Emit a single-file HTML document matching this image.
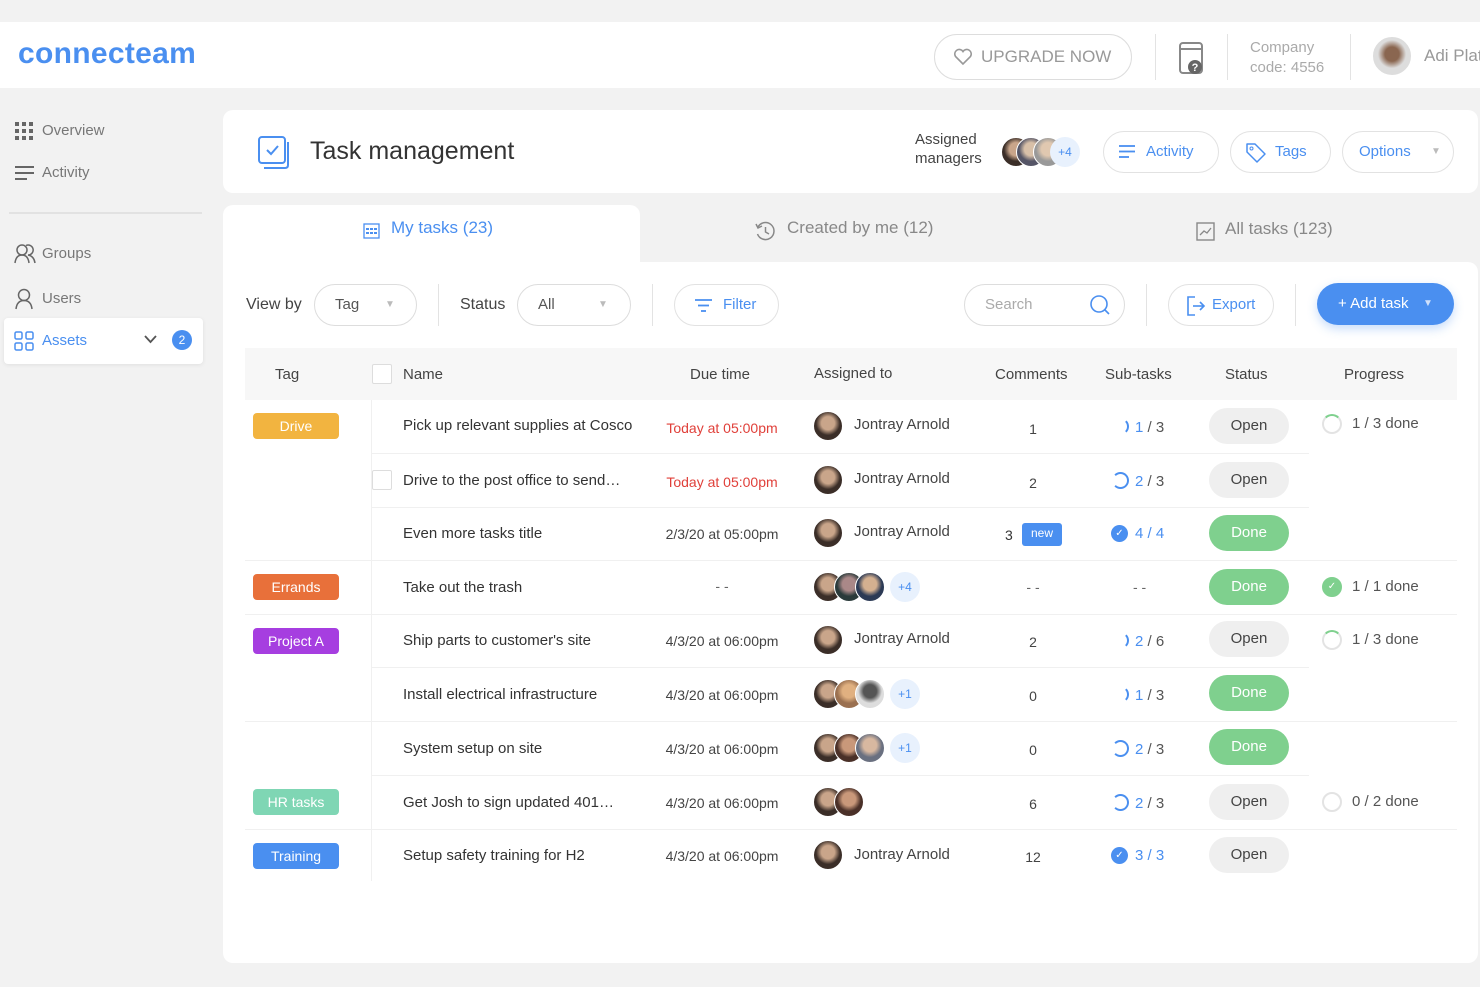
<!DOCTYPE html>
<html><head><meta charset="utf-8"><style>
*{box-sizing:border-box;margin:0;padding:0}
body{width:1480px;height:987px;background:#f2f2f2;font-family:"Liberation Sans",sans-serif;position:relative;overflow:hidden;color:#333}
.a{position:absolute;white-space:nowrap}
.hdr{left:0;top:22px;width:1480px;height:66px;background:#fff}
.logo{left:18px;top:37px;font-size:30px;color:#4a8ff0;font-weight:bold;letter-spacing:0.3px}
.up{left:934px;top:34px;width:198px;height:46px;border:1.5px solid #ddd;border-radius:23px;color:#999;font-size:17px;line-height:43px;padding-left:46px}
.vl{width:1px;background:#e3e3e3}
.side{color:#777;font-size:15px}
.card{background:#fff;border-radius:10px}
.btn{border:1.5px solid #e2e2e2;border-radius:22px;height:42px;line-height:39px;font-size:15px;color:#4a8ff0}
.sel{border:1.5px solid #ddd;border-radius:22px;height:42px;line-height:39px;font-size:15px;color:#555}
.th{font-size:15px;color:#444}
.tag{left:253px;width:86px;height:26px;border-radius:4px;color:#fff;font-size:14px;text-align:center;line-height:26px}
.nm{left:403px;font-size:15px;color:#333}
.due{width:160px;left:642px;text-align:center;font-size:14px;color:#444}
.red{color:#e0403a}
.av{width:30px;height:30px;border-radius:50%;background:radial-gradient(circle at 50% 40%,#c9a58a 0 30%,#3b2e28 55%);border:1.5px solid #fff}
.jn{left:854px;font-size:15px;color:#444}
.cm{left:1003px;width:60px;text-align:center;font-size:14px;color:#444}
.st{left:1112px;font-size:15px;color:#4a8ff0}
.pill{left:1209px;width:80px;height:36px;border-radius:18px;text-align:center;line-height:36px;font-size:15px}
.op{background:#efefef;color:#444}
.dn{background:#7fd08e;color:#fff}
.pr{left:1322px;font-size:15px;color:#555}
.ring{display:inline-block;width:20px;height:20px;border-radius:50%;border:2px solid #e3e3e3;border-top-color:#7fd08e;vertical-align:middle;margin-right:10px}
.sr{display:inline-block;width:17px;height:17px;border-radius:50%;border:2px solid transparent;border-right-color:#4a8ff0;vertical-align:-3px;margin-right:6px}
.sr2{border-color:#4a8ff0 #4a8ff0 #4a8ff0 transparent}
.more{width:30px;height:30px;border-radius:50%;background:#e8f1fd;color:#4a8ff0;font-size:12px;text-align:center;line-height:30px}
.rl{left:245px;width:1212px;height:1px;background:#f0f0f0}
</style></head><body>
<div class="a hdr"></div>
<div class="a logo">connecteam</div>
<div class="a up"><svg class="a" style="left:18px;top:13px" width="20" height="18" viewBox="0 0 20 18"><path d="M10 16 L2.5 8.5 A4.3 4.3 0 0 1 10 3.5 A4.3 4.3 0 0 1 17.5 8.5 Z" fill="none" stroke="#999" stroke-width="1.6"/></svg>UPGRADE NOW</div>
<div class="a vl" style="left:1155px;top:34px;height:46px"></div>
<svg class="a" style="left:1178px;top:40px" width="28" height="36" viewBox="0 0 28 36"><rect x="2" y="3" width="22" height="30" rx="3" fill="none" stroke="#888" stroke-width="2"/><line x1="2" y1="9" x2="24" y2="9" stroke="#888" stroke-width="2"/><circle cx="17" cy="27" r="7" fill="#666"/><text x="17" y="31" font-size="11" fill="#fff" text-anchor="middle" font-family="Liberation Sans" font-weight="bold">?</text></svg>
<div class="a vl" style="left:1227px;top:34px;height:46px"></div>
<div class="a" style="left:1250px;top:38px;font-size:15px;color:#aaa;line-height:20px">Company<br>code: 4556</div>
<div class="a vl" style="left:1350px;top:34px;height:46px"></div>
<div class="a av" style="left:1372px;top:36px;width:40px;height:40px;background:radial-gradient(circle at 50% 45%,#8a6650 0 25%,#ddd 50%)"></div>
<div class="a" style="left:1424px;top:46px;font-size:17px;color:#999">Adi Plat</div>

<svg class="a" style="left:15px;top:122px" width="18" height="18"><g fill="#666"><rect x="0" y="0" width="4" height="4"/><rect x="7" y="0" width="4" height="4"/><rect x="14" y="0" width="4" height="4"/><rect x="0" y="7" width="4" height="4"/><rect x="7" y="7" width="4" height="4"/><rect x="14" y="7" width="4" height="4"/><rect x="0" y="14" width="4" height="4"/><rect x="7" y="14" width="4" height="4"/><rect x="14" y="14" width="4" height="4"/></g></svg>
<div class="a side" style="left:42px;top:122px">Overview</div>
<svg class="a" style="left:15px;top:166px" width="19" height="14"><g stroke="#666" stroke-width="2"><line x1="0" y1="1" x2="19" y2="1"/><line x1="0" y1="7" x2="19" y2="7"/><line x1="0" y1="13" x2="12" y2="13"/></g></svg>
<div class="a side" style="left:42px;top:164px">Activity</div>
<div class="a" style="left:9px;top:212px;width:193px;height:2px;background:#e2e2e2"></div>
<svg class="a" style="left:14px;top:243px" width="22" height="22" viewBox="0 0 22 22"><g fill="none" stroke="#666" stroke-width="1.5"><circle cx="8" cy="7" r="5"/><path d="M1 20 Q2 12 8 12 Q14 12 15 20"/><path d="M12 2.5 A5 5 0 1 1 14 12 Q20 13 21 20"/></g></svg>
<div class="a side" style="left:42px;top:245px">Groups</div>
<svg class="a" style="left:14px;top:288px" width="20" height="22" viewBox="0 0 20 22"><g fill="none" stroke="#666" stroke-width="1.5"><circle cx="10" cy="7" r="5.5"/><path d="M2 21 Q3 12.5 10 12.5 Q17 12.5 18 21"/></g></svg>
<div class="a side" style="left:42px;top:290px">Users</div>
<div class="a" style="left:4px;top:318px;width:199px;height:46px;background:#fff;border-radius:4px;box-shadow:0 1px 4px rgba(0,0,0,.08)"></div>
<svg class="a" style="left:14px;top:331px" width="21" height="21"><g fill="none" stroke="#4a8ff0" stroke-width="1.5"><rect x="1" y="1" width="7" height="7" rx="1.5"/><rect x="12" y="1" width="7" height="7" rx="1.5"/><rect x="1" y="12" width="7" height="7" rx="1.5"/><rect x="12" y="12" width="7" height="7" rx="1.5"/></g></svg>
<div class="a side" style="left:42px;top:332px;color:#4a8ff0">Assets</div>
<svg class="a" style="left:144px;top:335px" width="13" height="9"><path d="M1 1 L6.5 7 L12 1" fill="none" stroke="#555" stroke-width="1.8"/></svg>
<div class="a" style="left:172px;top:330px;width:20px;height:20px;border-radius:50%;background:#4a8ff0;color:#fff;font-size:12px;text-align:center;line-height:20px">2</div>

<div class="a card" style="left:223px;top:110px;width:1255px;height:83px"></div>
<svg class="a" style="left:257px;top:135px" width="36" height="36" viewBox="0 0 36 36"><rect x="2" y="2" width="26" height="26" rx="3" fill="none" stroke="#4a8ff0" stroke-width="2"/><path d="M31 7 V30 Q31 33 28 33 H7" fill="none" stroke="#4a8ff0" stroke-width="2"/><path d="M10 15 L14 19 L21 11" fill="none" stroke="#4a8ff0" stroke-width="2"/></svg>
<div class="a" style="left:310px;top:137px;font-size:25px;color:#333">Task management</div>
<div class="a" style="left:915px;top:130px;font-size:15px;color:#444;line-height:19px">Assigned<br>managers</div>
<div class="a av" style="left:1001px;top:137px"></div>
<div class="a av" style="left:1016px;top:137px;background:radial-gradient(circle at 50% 40%,#d8c0a8 0 30%,#556 55%)"></div>
<div class="a av" style="left:1033px;top:137px;background:radial-gradient(circle at 50% 40%,#e0c8b0 0 30%,#999 55%)"></div>
<div class="a more" style="left:1050px;top:137px">+4</div>
<div class="a btn" style="left:1103px;top:131px;width:116px;padding-left:42px">Activity<svg class="a" style="left:15px;top:13px" width="16" height="13"><g stroke="#4a8ff0" stroke-width="1.8"><line x1="0" y1="1" x2="16" y2="1"/><line x1="0" y1="6.5" x2="16" y2="6.5"/><line x1="0" y1="12" x2="10" y2="12"/></g></svg></div>
<div class="a btn" style="left:1230px;top:131px;width:101px;padding-left:44px">Tags<svg class="a" style="left:14px;top:10px" width="22" height="22" viewBox="0 0 22 22"><path d="M2 2 H10 L20 12 L12 20 L2 10 Z" fill="none" stroke="#4a8ff0" stroke-width="1.5" stroke-linejoin="round"/><circle cx="6.5" cy="6.5" r="1.5" fill="none" stroke="#4a8ff0"/></svg></div>
<div class="a btn" style="left:1342px;top:131px;width:112px;padding-left:16px">Options<span class="a" style="left:88px;top:0;color:#bbb;font-size:10px">▼</span></div>

<div class="a" style="left:223px;top:205px;width:417px;height:70px;background:#fff;border-radius:10px 10px 0 0"></div>
<svg class="a" style="left:363px;top:222px" width="17" height="17"><rect x="1" y="2" width="15" height="14" fill="none" stroke="#4a8ff0" stroke-width="1.3"/><g fill="#4a8ff0"><rect x="3" y="6" width="3" height="2"/><rect x="7" y="6" width="3" height="2"/><rect x="11" y="6" width="3" height="2"/><rect x="3" y="10" width="3" height="2"/><rect x="7" y="10" width="3" height="2"/><rect x="11" y="10" width="3" height="2"/></g></svg>
<div class="a" style="left:391px;top:218px;font-size:17px;color:#4a8ff0">My tasks (23)</div>
<svg class="a" style="left:755px;top:221px" width="21" height="21" viewBox="0 0 21 21"><path d="M3 6 A8.5 8.5 0 1 1 2.5 13" fill="none" stroke="#888" stroke-width="1.5"/><path d="M1 3 L3 7 L7 5" fill="none" stroke="#888" stroke-width="1.5"/><path d="M10.5 6 V11 L14 13" fill="none" stroke="#888" stroke-width="1.5"/></svg>
<div class="a" style="left:787px;top:218px;font-size:17px;color:#888">Created by me (12)</div>
<svg class="a" style="left:1196px;top:222px" width="19" height="19"><rect x="1" y="1" width="17" height="17" fill="none" stroke="#888" stroke-width="1.4"/><path d="M4 13 L8 9 L11 11 L15 6" fill="none" stroke="#888" stroke-width="1.3"/></svg>
<div class="a" style="left:1225px;top:219px;font-size:17px;color:#888">All tasks (123)</div>

<div class="a" style="left:223px;top:262px;width:1255px;height:701px;background:#fff;border-radius:0 10px 10px 10px"></div>
<div class="a" style="left:223px;top:263px;width:417px;height:12px;background:#fff"></div>
<div class="a" style="left:246px;top:296px;font-size:16px;color:#444">View by</div>
<div class="a sel" style="left:314px;top:284px;width:103px;padding-left:20px">Tag<span class="a" style="left:70px;color:#bbb;font-size:10px">▼</span></div>
<div class="a vl" style="left:438px;top:284px;height:42px"></div>
<div class="a" style="left:460px;top:296px;font-size:16px;color:#444">Status</div>
<div class="a sel" style="left:517px;top:284px;width:114px;padding-left:20px">All<span class="a" style="left:80px;color:#bbb;font-size:10px">▼</span></div>
<div class="a vl" style="left:652px;top:284px;height:42px"></div>
<div class="a btn" style="left:674px;top:284px;width:105px;padding-left:48px">Filter<svg class="a" style="left:20px;top:14px" width="17" height="14"><g stroke="#4a8ff0" stroke-width="1.8"><line x1="0" y1="1" x2="17" y2="1"/><line x1="3" y1="6.5" x2="14" y2="6.5"/><line x1="6" y1="12" x2="11" y2="12"/></g></svg></div>
<div class="a sel" style="left:964px;top:284px;width:161px;padding-left:20px;color:#aaa">Search<svg class="a" style="left:124px;top:9px" width="22" height="22"><circle cx="10" cy="10" r="8" fill="none" stroke="#4a8ff0" stroke-width="1.6"/><line x1="15.5" y1="15.5" x2="20" y2="20" stroke="#4a8ff0" stroke-width="1.6"/></svg></div>
<div class="a vl" style="left:1146px;top:284px;height:42px"></div>
<div class="a btn" style="left:1168px;top:284px;width:106px;padding-left:43px">Export<svg class="a" style="left:16px;top:10px" width="22" height="22"><path d="M10 2 H3 V20 H10" fill="none" stroke="#4a8ff0" stroke-width="1.6"/><line x1="8" y1="11" x2="19" y2="11" stroke="#4a8ff0" stroke-width="1.6"/><path d="M15 7 L19 11 L15 15" fill="none" stroke="#4a8ff0" stroke-width="1.6"/></svg></div>
<div class="a vl" style="left:1295px;top:284px;height:42px"></div>
<div class="a" style="left:1317px;top:283px;width:137px;height:42px;border-radius:21px;background:#4a8ff0;color:#fff;font-size:15px;line-height:42px;padding-left:21px;box-shadow:0 4px 10px rgba(74,143,240,.3)">+ Add task<span class="a" style="left:106px;font-size:10px;color:#cfe0fb">▼</span></div>

<div class="a" style="left:245px;top:348px;width:1212px;height:52px;background:#f7f7f7"></div>
<div class="a th" style="left:275px;top:366px">Tag</div>
<div class="a" style="left:372px;top:364px;width:20px;height:20px;border:1.5px solid #ddd;background:#fff;border-radius:2px"></div>
<div class="a th" style="left:403px;top:366px">Name</div>
<div class="a th" style="left:690px;top:366px">Due time</div>
<div class="a th" style="left:814px;top:365px">Assigned to</div>
<div class="a th" style="left:995px;top:366px">Comments</div>
<div class="a th" style="left:1105px;top:366px">Sub-tasks</div>
<div class="a th" style="left:1225px;top:366px">Status</div>
<div class="a th" style="left:1344px;top:366px">Progress</div>

<div class="a" style="left:371px;top:400px;width:1px;height:481px;background:#f0f0f0"></div>
<div class="a rl" style="top:453px;left:372px;width:937px"></div>
<div class="a rl" style="top:507px;left:372px;width:937px"></div>
<div class="a rl" style="top:560px"></div>
<div class="a rl" style="top:614px"></div>
<div class="a rl" style="top:667px;left:372px;width:937px"></div>
<div class="a rl" style="top:721px"></div>
<div class="a rl" style="top:775px;left:372px;width:937px"></div>
<div class="a rl" style="top:829px"></div>

<div class="a tag" style="top:413px;background:#f2b440">Drive</div>
<div class="a nm" style="top:417px">Pick up relevant supplies at Cosco</div>
<div class="a due red" style="top:420px">Today at 05:00pm</div>
<div class="a av" style="left:813px;top:411px"></div><div class="a jn" style="top:416px">Jontray Arnold</div>
<div class="a cm" style="top:421px">1</div>
<div class="a st" style="top:418px"><span class="sr"></span>1 <span style="color:#555">/ 3</span></div>
<div class="a pill op" style="top:408px">Open</div>
<div class="a pr" style="top:414px"><span class="ring"></span>1 / 3 done</div>

<div class="a" style="left:372px;top:470px;width:20px;height:20px;border:1.5px solid #ddd;border-radius:2px"></div>
<div class="a nm" style="top:472px">Drive to the post office to send…</div>
<div class="a due red" style="top:474px">Today at 05:00pm</div>
<div class="a av" style="left:813px;top:465px"></div><div class="a jn" style="top:470px">Jontray Arnold</div>
<div class="a cm" style="top:475px">2</div>
<div class="a st" style="top:472px"><span class="sr sr2"></span>2 <span style="color:#555">/ 3</span></div>
<div class="a pill op" style="top:462px">Open</div>

<div class="a nm" style="top:525px">Even more tasks title</div>
<div class="a due" style="top:526px">2/3/20 at 05:00pm</div>
<div class="a av" style="left:813px;top:518px"></div><div class="a jn" style="top:523px">Jontray Arnold</div>
<div class="a" style="left:1005px;top:527px;font-size:14px">3</div>
<div class="a" style="left:1022px;top:523px;width:40px;height:23px;background:#4a8ff0;border-radius:3px;color:#fff;font-size:12px;text-align:center;line-height:20px">new</div>
<div class="a" style="left:1111px;top:525px;width:17px;height:17px;border-radius:50%;background:#4a8ff0;color:#fff;font-size:10px;text-align:center;line-height:17px">✓</div>
<div class="a st" style="left:1135px;top:525px">4 / 4</div>
<div class="a pill dn" style="top:515px">Done</div>

<div class="a tag" style="top:574px;background:#e8703a">Errands</div>
<div class="a nm" style="top:579px">Take out the trash</div>
<div class="a due" style="top:578px;color:#666">- -</div>
<div class="a av" style="left:813px;top:572px"></div><div class="a av" style="left:834px;top:572px;background:radial-gradient(circle at 50% 40%,#a88 0 30%,#2a3a3a 55%)"></div><div class="a av" style="left:855px;top:572px;background:radial-gradient(circle at 50% 40%,#d4b090 0 30%,#2c3a55 55%)"></div>
<div class="a more" style="left:890px;top:572px">+4</div>
<div class="a cm" style="top:579px;color:#666">- -</div>
<div class="a" style="left:1133px;top:579px;color:#666;font-size:14px">- -</div>
<div class="a pill dn" style="top:569px">Done</div>
<div class="a pr" style="top:577px"><span class="ring" style="background:#7fd08e;border-color:#7fd08e;color:#fff;font-size:10px;text-align:center;line-height:16px">✓</span>1 / 1 done</div>

<div class="a tag" style="top:628px;background:#a63ee0">Project A</div>
<div class="a nm" style="top:632px">Ship parts to customer's site</div>
<div class="a due" style="top:633px">4/3/20 at 06:00pm</div>
<div class="a av" style="left:813px;top:625px"></div><div class="a jn" style="top:630px">Jontray Arnold</div>
<div class="a cm" style="top:634px">2</div>
<div class="a st" style="top:632px"><span class="sr"></span>2 <span style="color:#555">/ 6</span></div>
<div class="a pill op" style="top:621px">Open</div>
<div class="a pr" style="top:630px"><span class="ring"></span>1 / 3 done</div>

<div class="a nm" style="top:686px">Install electrical infrastructure</div>
<div class="a due" style="top:687px">4/3/20 at 06:00pm</div>
<div class="a av" style="left:813px;top:679px"></div><div class="a av" style="left:834px;top:679px;background:radial-gradient(circle at 50% 40%,#e0b080 0 30%,#9a7050 55%)"></div><div class="a av" style="left:855px;top:679px;background:radial-gradient(circle at 50% 40%,#555 0 30%,#ddd 55%)"></div>
<div class="a more" style="left:890px;top:679px">+1</div>
<div class="a cm" style="top:688px">0</div>
<div class="a st" style="top:686px"><span class="sr"></span>1 <span style="color:#555">/ 3</span></div>
<div class="a pill dn" style="top:675px">Done</div>

<div class="a nm" style="top:740px">System setup on site</div>
<div class="a due" style="top:741px">4/3/20 at 06:00pm</div>
<div class="a av" style="left:813px;top:733px"></div><div class="a av" style="left:834px;top:733px;background:radial-gradient(circle at 50% 40%,#c9987a 0 30%,#4a3028 55%)"></div><div class="a av" style="left:855px;top:733px;background:radial-gradient(circle at 50% 40%,#d8b8a0 0 30%,#6a7080 55%)"></div>
<div class="a more" style="left:890px;top:733px">+1</div>
<div class="a cm" style="top:742px">0</div>
<div class="a st" style="top:740px"><span class="sr sr2"></span>2 <span style="color:#555">/ 3</span></div>
<div class="a pill dn" style="top:729px">Done</div>

<div class="a tag" style="top:789px;background:#7fd6b4">HR tasks</div>
<div class="a nm" style="top:794px">Get Josh to sign updated 401…</div>
<div class="a due" style="top:795px">4/3/20 at 06:00pm</div>
<div class="a av" style="left:813px;top:787px"></div><div class="a av" style="left:834px;top:787px;background:radial-gradient(circle at 50% 40%,#c9987a 0 30%,#4a3028 55%)"></div>
<div class="a cm" style="top:796px">6</div>
<div class="a st" style="top:794px"><span class="sr sr2"></span>2 <span style="color:#555">/ 3</span></div>
<div class="a pill op" style="top:784px">Open</div>
<div class="a pr" style="top:792px"><span class="ring" style="border-color:#e3e3e3"></span>0 / 2 done</div>

<div class="a tag" style="top:843px;background:#4a8ff0">Training</div>
<div class="a nm" style="top:847px">Setup safety training for H2</div>
<div class="a due" style="top:848px">4/3/20 at 06:00pm</div>
<div class="a av" style="left:813px;top:840px"></div><div class="a jn" style="top:846px">Jontray Arnold</div>
<div class="a cm" style="top:849px">12</div>
<div class="a" style="left:1111px;top:847px;width:17px;height:17px;border-radius:50%;background:#4a8ff0;color:#fff;font-size:10px;text-align:center;line-height:17px">✓</div>
<div class="a st" style="left:1135px;top:847px">3 / 3</div>
<div class="a pill op" style="top:837px">Open</div>
</body></html>
